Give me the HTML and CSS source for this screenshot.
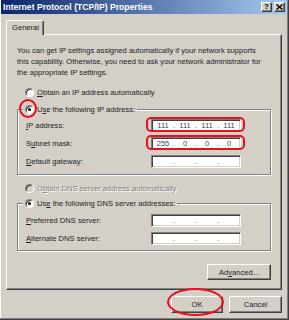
FILE: index.html
```html
<!DOCTYPE html>
<html lang="en">
<head>
  <meta charset="UTF-8">
  <title>Internet Protocol (TCP/IP) Properties</title>
  <link rel="stylesheet" href="styles.css">
</head>
<body>
  <div class="window">
    <div class="titlebar">
      <span class="title">Internet Protocol (TCP/IP) Properties</span>
      <div class="caption-btns">
        <span class="cbtn">?</span>
        <span class="cbtn">
          <svg width="7" height="6" viewBox="0 0 7 6"><path d="M0.5 0.5 L6.5 5.5 M6.5 0.5 L0.5 5.5" stroke="#000" stroke-width="1.4"/></svg>
        </span>
      </div>
    </div>

    <div class="body">
      <div class="tabs"><span class="tab">General</span></div>

      <div class="panel">
        <p class="intro">You can get IP settings assigned automatically if your network supports<br>this capability. Otherwise, you need to ask your network administrator for<br>the appropriate IP settings.</p>

        <div class="radio radio-first"><span class="dot"></span><span><u>O</u>btain an IP address automatically</span></div>

        <fieldset class="group">
          <legend><span class="radio"><span class="dot checked"></span><span>U<u>s</u>e the following IP address:</span></span></legend>
          <div class="row">
            <span class="lbl"><u>I</u>P address:</span>
            <div class="ip"><span>111</span><i>.</i><span>111</span><i>.</i><span>111</span><i>.</i><span>111</span></div>
          </div>
          <div class="row">
            <span class="lbl">S<u>u</u>bnet mask:</span>
            <div class="ip"><span>255</span><i>.</i><span>0</span><i>.</i><span>0</span><i>.</i><span>0</span></div>
          </div>
          <div class="row">
            <span class="lbl"><u>D</u>efault gateway:</span>
            <div class="ip"><span></span><i>.</i><span></span><i>.</i><span></span><i>.</i><span></span></div>
          </div>
        </fieldset>

        <div class="radio radio-off"><span class="dot disabled"></span><span>O<u>b</u>tain DNS server address automatically</span></div>

        <fieldset class="group group-dns">
          <legend><span class="radio"><span class="dot checked"></span><span>Us<u>e</u> the following DNS server addresses:</span></span></legend>
          <div class="row">
            <span class="lbl"><u>P</u>referred DNS server:</span>
            <div class="ip"><span></span><i>.</i><span></span><i>.</i><span></span><i>.</i><span></span></div>
          </div>
          <div class="row">
            <span class="lbl"><u>A</u>lternate DNS server:</span>
            <div class="ip"><span></span><i>.</i><span></span><i>.</i><span></span><i>.</i><span></span></div>
          </div>
        </fieldset>

        <div class="adv-row"><button class="btn btn-adv">Ad<u>v</u>anced...</button></div>
      </div>

      <div class="actions">
        <button class="btn btn-ok">OK</button>
        <button class="btn btn-cancel">Cancel</button>
      </div>
    </div>

    <!-- red annotations drawn over the dialog -->
    <span class="mark mark-radio"></span>
    <span class="mark mark-ip"></span>
    <span class="mark mark-mask"></span>
    <span class="mark mark-ok"></span>
  </div>
</body>
</html>
```

FILE: styles.css
```css
body {
  margin: 0;
  background: #d4d0c8;
  font-family: "Liberation Sans", Arial, sans-serif;
  font-size: 7.6px;
  color: #222;
}

.window {
  position: relative;
  width: 289px;
  height: 320px;
  box-sizing: border-box;
  background: #d4d0c8;
  border-right: 1px solid #404040;
  border-bottom: 1px solid #404040;
  box-shadow: inset -1px -1px #808080, inset 1px 0 #fff;
}

.titlebar {
  display: flex;
  align-items: center;
  justify-content: space-between;
  height: 14px;
  margin: 0 1px 0 1px;
  padding: 0 2px 0 2px;
  background: linear-gradient(to right, #0a246a, #a6caf0);
}

.title {
  color: #fff;
  font-weight: bold;
  font-size: 8.6px;
  white-space: nowrap;
}

.caption-btns {
  display: flex;
  gap: 2px;
}

.cbtn {
  display: flex;
  align-items: center;
  justify-content: center;
  width: 11px;
  height: 10px;
  box-sizing: border-box;
  background: #d4d0c8;
  border: 1px solid;
  border-color: #fff #404040 #404040 #fff;
  box-shadow: inset -1px -1px #808080;
  font-weight: bold;
  font-size: 8px;
  line-height: 8px;
  color: #000;
}

.body {
  padding: 6px 6px 0 6px;
}

.tabs {
  display: flex;
}

.tab {
  position: relative;
  z-index: 1;
  width: 38px;
  height: 15px;
  box-sizing: border-box;
  margin-bottom: -1px;
  padding-left: 5px;
  line-height: 14px;
  background: #d4d0c8;
  border: 1px solid;
  border-color: #fff #404040 transparent #fff;
  border-bottom: none;
  border-radius: 2px 2px 0 0;
  box-shadow: inset -1px 0 #808080;
}

.panel {
  padding: 10px 10px 9px 10px;
  border: 1px solid;
  border-color: #fff #404040 #404040 #fff;
  box-shadow: inset -1px -1px #808080;
}

.intro {
  margin: 0;
  line-height: 11px;
  white-space: nowrap;
}

.radio {
  display: flex;
  align-items: center;
  gap: 3px;
  height: 11px;
  line-height: 11px;
  white-space: nowrap;
}

.radio-first {
  margin: 9px 0 0 8px;
}

.radio-off {
  margin: 8px 0 0 8px;
  color: #808080;
  text-shadow: 1px 1px #fff;
}

.dot {
  display: inline-flex;
  align-items: center;
  justify-content: center;
  width: 9px;
  height: 9px;
  box-sizing: border-box;
  border-radius: 50%;
  background: #fff;
  border: 1px solid;
  border-color: #808080 #fff #fff #808080;
  box-shadow: inset 1px 1px #404040;
}

.dot.checked::after {
  content: "";
  width: 3px;
  height: 3px;
  border-radius: 50%;
  background: #000;
}

.dot.disabled {
  background: #d4d0c8;
}

.group {
  margin: 6px 0 0 0;
  padding: 4px 8px 6px 8px;
  border: 1px solid #808080;
  box-shadow: inset 1px 1px #fff, 1px 1px #fff;
  display: flex;
  flex-direction: column;
  gap: 5px;
}

.group-dns {
  margin-top: 4px;
  padding-top: 5px;
  padding-bottom: 5px;
}

.group legend {
  margin-left: -3px;
  padding: 0 2px;
  background: #d4d0c8;
}

.row {
  display: flex;
  align-items: center;
  height: 13px;
  white-space: nowrap;
}

.lbl {
  width: 125px;
}

.ip {
  display: grid;
  grid-template-columns: 1fr 2px 1fr 2px 1fr 2px 1fr;
  align-items: center;
  width: 90px;
  height: 13px;
  box-sizing: border-box;
  padding: 0 1px;
  background: #fff;
  border: 1px solid;
  border-color: #808080 #fff #fff #808080;
  box-shadow: inset 1px 1px #404040, inset -1px -1px #d4d0c8;
  color: #444;
  line-height: 11px;
}

.ip span {
  text-align: center;
}

.ip i {
  font-style: normal;
  text-align: center;
}

.adv-row {
  display: flex;
  justify-content: flex-end;
  margin-top: 13px;
}

.btn {
  height: 16px;
  box-sizing: border-box;
  padding: 0;
  font-family: "Liberation Sans", Arial, sans-serif;
  font-size: 7.6px;
  color: #222;
  background: #d4d0c8;
  border: 1px solid;
  border-color: #fff #404040 #404040 #fff;
  box-shadow: inset -1px -1px #808080;
}

.btn-adv {
  width: 64px;
}

.actions {
  display: flex;
  justify-content: flex-end;
  gap: 6px;
  margin-top: 6px;
}

.btn-ok,
.btn-cancel {
  height: 17px;
}

.btn-ok {
  width: 52px;
}

.btn-cancel {
  width: 53px;
}

.mark {
  position: absolute;
  box-sizing: border-box;
  border: 2px solid #e8101a;
}

.mark-radio {
  left: 19px;
  top: 99px;
  width: 18px;
  height: 19px;
  border-radius: 50%;
}

.mark-ip {
  left: 146px;
  top: 117px;
  width: 99px;
  height: 15px;
  border-radius: 5px;
}

.mark-mask {
  left: 146px;
  top: 135px;
  width: 99px;
  height: 15px;
  border-radius: 5px;
}

.mark-ok {
  left: 167px;
  top: 288px;
  width: 57px;
  height: 28px;
  border-radius: 50%;
}
```
